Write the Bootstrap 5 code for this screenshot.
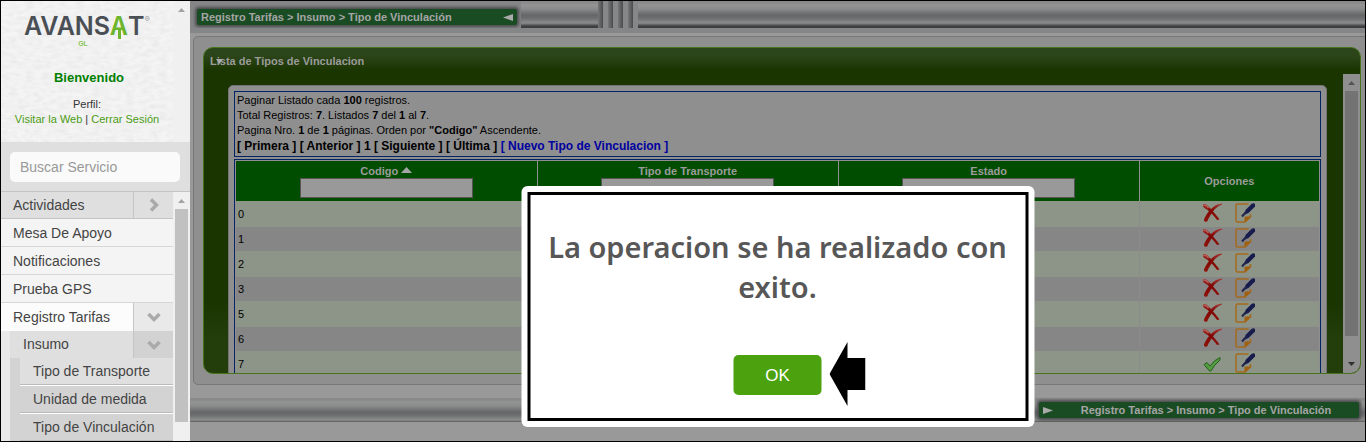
<!DOCTYPE html>
<html lang="es">
<head>
<meta charset="utf-8">
<meta name="viewport" content="width=device-width, initial-scale=1">
<title>Avansat GL - Tipo de Vinculación</title>
<link href="https://cdn.jsdelivr.net/npm/bootstrap@5.3.0/dist/css/bootstrap.min.css" rel="stylesheet">
<style>
*{border-radius:0}
body{font:11px/15px "Liberation Sans",Arial,sans-serif;color:#000;background:#999}
a{text-decoration:none;color:inherit}
.app{border:1px solid #000;height:100vh}
/* sidebar */
.side{width:189px;background:#f0f0f0}
.scroller{width:17px;flex:none;background:#f0f0f0}
.scroller svg{width:17px;height:17px;display:block}
.scroller .thumb{background:#c1c1c1;width:13px;margin:0 auto}
.side .thumb{height:213px}
.brand{height:141px;background:#f4f4f4;position:relative;font-size:11px;color:#333}
.texture{position:absolute;inset:0;width:100%;height:100%}
.logo{font:600 25px/24px Inter,sans-serif;color:#4a4f55;padding-top:13px}
.logo sup{font-size:8px;line-height:8px;color:#999;top:-13px;font-weight:400}
.logo-a{color:#6db52d;position:relative}
.logo-a::after{content:"";position:absolute;left:8px;top:18px;width:3px;height:10px;background:#6db52d}
.logo-sub{font-size:7px;line-height:8px;font-weight:700;color:#8cc45a;margin:2px 8px 0 0}
.hello{font-size:13px;line-height:16px;font-weight:700;color:#008000;margin:22px 0 11px 4px}
.green-link{color:#4b9c14}
.find{background:#dfdfdf;padding:10px 9px 9px;border-bottom:1px solid #c4c4c4}
.find input{height:30px;font-size:14px;border:0;border-radius:5px;background:#fafafa;padding:0 10px;width:170px}
.find input::placeholder{color:#999}
.tree{font-size:14px;color:#444;background:#f4f4f4}
.tree a{padding-left:12px;height:27px;line-height:28px;display:block;flex:1}
.tree li{border-bottom:1px solid #d6d6d6;height:28px;display:flex}
.tree li.short{height:27px}
.tree li.short a,.tree li.leaf a{line-height:26px;padding-left:13px}
.tree li.grey a{padding-left:12px}
.tree li.grey{background:#dfdfdf;border-color:#c4c4c4}
.tree li.open{background:#fcfcfc;border:0}
.tree button{width:40px;border:0;border-left:1px solid #c4c4c4;background:#dfdfdf;padding:0;display:flex;align-items:center;justify-content:center}
.tree .open button{background:#e9e9e9}
.tree li.insumo{background:#dfdfdf;margin-left:9px;border:0}
.tree li.insumo button{background:#d2d2d2}
.tree li.leaf{background:#d3d3d3;margin-left:19px;border-bottom:1px solid #fff;box-shadow:inset 0 -1px #bbb}
.tree li.leaf:first-of-type{background:#dfdfdf}
.rail{background:linear-gradient(90deg,#e9e9e9 9px,#d3d3d3 9px)}
/* header and footer bars */
.metal{background:linear-gradient(#8a8a8c 0 2px,#949494 4px,#8a8b8b 8px,#666768 14px,#6c6d6e 17px,#8b8c8c 22px,#747474 23px,#404142 25px,#3d3e3f 26px)}
.topbar{height:27px}
.under{height:5px;background:#858688}
.crumb{background:#1a4c24;color:#a5a5a5;font-weight:700;width:320px;height:16px;border-radius:2px;box-shadow:0 0 3px 2px #4c4d4e}
.crumb svg{width:10px;height:7px}
.plate{background:#858588;width:331px;padding:8px 3px 0 7px}
.grips{width:40px;height:27px;margin-left:77px;background:repeating-linear-gradient(90deg,#777 0,#4a4b4c 5px,#868789 5px,#868789 10px)}
.outer{border:1px solid #777;background:#8f8f8f;border-radius:5px;margin:3px -4px 0 3px;padding:10px 7px 10px 9px;flex:1;min-height:0}
.greenbox{border:1px solid #47731a;border-radius:10px;background:linear-gradient(#2c461b,#2b4519 8px,#1a3500 22px,#1a3500 calc(100% - 70px),#233e0b calc(100% - 35px));height:100%;overflow:hidden}
.greenbox h1{font-size:11px;line-height:15px;font-weight:700;color:#9b9b9b;margin:0;padding:6px 0 5px 6px;position:relative}
.greenbox h1 svg{position:absolute;left:12px;top:11px;width:7px;height:5px}
.dim{background:#8f8f8f}
.dim .thumb{background:#737373;height:245px}
.sheet{background:#8f8f8f;border:1px solid #747474;border-radius:5px;margin:11px 16px 0 24px;padding:5px;flex:1}
.info{border:1px solid #012466;padding:1px 2px 2px;height:66px}
.pager{font-size:12px;font-weight:700;line-height:16px}
.blue{color:#0000a0}
.gridbox{border:1px solid #012466;margin-top:2px;padding:1px}
.gridbox table{width:100%;table-layout:fixed;border-collapse:collapse}
.gridbox th{background:#004d00;color:#9b9b9b;text-align:center;height:40px;padding:0;border-right:1px solid #8f8f8f;vertical-align:middle;line-height:14px}
.gridbox th:last-child,.gridbox td:last-child{border-right:0}
.gridbox th label{display:block}
.gridbox th svg{width:11px;height:6px;vertical-align:2px}
.gridbox th input{display:block;width:173px;height:20px;margin:0 auto;border:1px solid #555;background:#999;padding:0}
.gridbox td{height:24px;padding:0 2px;background:#868686;border-right:1px solid #8b8b8b;line-height:15px}
.gridbox tr:nth-child(odd) td{height:26px;background:#8c9588}
.gridbox td:last-child{text-align:center;padding:0 2px 2px 0}
.act{border:0;background:none;padding:0;width:20px;height:20px;vertical-align:middle}
.act + .act{margin-left:13px}
.act svg{display:block;width:20px;height:20px}
.footbar{height:24px;margin-top:13px;margin-bottom:19px}
.foot-plate{width:325px;padding:4px 3px 0 2px;margin-right:3px}
/* dialog over the page */
.dlg{position:absolute;left:50%;top:185px;transform:translateX(-50%);width:513px;max-width:100%;background:#fff;border-radius:6px;padding:6px}
.dlg-in{border:3px solid #000;padding:32px 0 23px;text-align:center}
.dlg h2{font:600 29px/40px "Noto Sans","Open Sans",sans-serif;color:#575757;margin:0 0 48px}
.ok{width:88px;height:40px;border:0;border-radius:5px;background:#4ba20e;color:#fff;font-size:17px;font-weight:500;display:block}
.pointer{position:absolute;left:96px;top:-13px;width:36px;height:64px}
</style>
</head>
<body>
<svg width="0" height="0" class="position-absolute" aria-hidden="true">
<defs>
<linearGradient id="red" x1="0" y1="0" x2="0" y2="1"><stop offset="0" stop-color="#a63a34"/><stop offset=".4" stop-color="#810503"/><stop offset="1" stop-color="#8f150c"/></linearGradient>
<symbol id="cross" viewBox="0 0 20 20"><path d="M1 1.5C4-.5 6 3 9 6 12 3 15 1 20 .5L20 1.5C16 3 13 5.500 11 8.500 13 11 15.500 13 17.500 16.500L15 17C13 14 11 12 9.500 10.500 8 13 6 16 5.500 18 4 19.500 1.500 19 2 16.500 3 13.500 5 10.500 7 8.200 5 6 2 5.500 1 3.500Z" fill="url(#red)"/><path d="M1.500 2.500Q4 1.500 6.500 5" stroke="#b7605a" stroke-width="1.500" fill="none"/></symbol>
<symbol id="note" viewBox="0 0 20 20"><path d="M13.500 1H2.500Q1 1 1 2.500V17.500Q1 19 2.500 19H10L15.500 14V11" fill="none" stroke="#a5691c" stroke-width="1.500"/><path d="M9.500 19.500V14.500Q9.500 13.500 10.500 13.500H16Z" fill="#a0600f"/><path d="M10.500 7 16.500 1Q18.500-.5 20 1V3.500L13.500 10 10 11.500Z" fill="#171c4d"/><path d="M7 13.500 11.500 8.500" stroke="#20244d" stroke-width="2"/></symbol>
<symbol id="tick" viewBox="0 0 20 20"><path d="M2 11.500 5 9.500 8 13Q12 7 18 4.500V7Q12 12 9 18H7.500Z" fill="#529a40" stroke="#28621f" stroke-width="1"/></symbol>
<symbol id="down" viewBox="0 0 14 10"><path d="M1.500 2 7 7.500 12.500 2" fill="none" stroke="#aaa" stroke-width="3.500"/></symbol>
<symbol id="sup" viewBox="0 0 17 17"><path d="M5 11 8.500 7 12 11Z"/></symbol>
</defs></svg>
<div class="app d-flex overflow-hidden">
<aside class="side flex-shrink-0 d-flex flex-column">
  <div class="d-flex">
    <div class="brand flex-grow-1 text-center">
      <svg class="texture" aria-hidden="true"><filter id="fur"><feTurbulence type="fractalNoise" baseFrequency=".12 .25" numOctaves="3" seed="4"/><feColorMatrix values="0 0 0 0 .45  0 0 0 0 .45  0 0 0 0 .45  .3 0 0 0 -.1"/></filter><rect width="100%" height="100%" filter="url(#fur)"/></svg>
      <div class="position-relative">
        <div class="logo text-nowrap">AVANS<span class="logo-a">A</span>T<sup>®</sup></div>
        <div class="logo-sub">GL</div>
        <div class="hello">Bienvenido</div>
        <div>Perfil:</div>
        <div class="text-nowrap"><a class="green-link" href="#">Visitar la Web</a> | <a class="green-link" href="#">Cerrar Sesión</a></div>
      </div>
    </div>
    <div class="scroller"><svg fill="#a3a3a3"><use href="#sup"/></svg></div>
  </div>
  <div class="find"><input type="text" placeholder="Buscar Servicio" aria-label="Buscar Servicio"></div>
  <div class="d-flex flex-grow-1 overflow-hidden">
    <nav class="tree flex-grow-1">
      <ul class="list-unstyled m-0">
        <li class="short grey"><a href="#">Actividades</a><button aria-label="Abrir"><svg width="10" height="14" viewBox="0 0 10 14"><path d="M2 1.500 7.500 7 2 12.500" fill="none" stroke="#aaa" stroke-width="3.500"/></svg></button></li>
        <li><a href="#">Mesa De Apoyo</a></li>
        <li><a href="#">Notificaciones</a></li>
        <li><a href="#">Prueba GPS</a></li>
        <li class="open"><a href="#">Registro Tarifas</a><button aria-label="Cerrar"><svg width="14" height="10"><use href="#down"/></svg></button></li>
      </ul>
      <ul class="list-unstyled m-0 rail">
        <li class="short insumo"><a href="#">Insumo</a><button aria-label="Cerrar"><svg width="14" height="10"><use href="#down"/></svg></button></li>
      </ul>
      <ul class="list-unstyled m-0 rail">
        <li class="leaf"><a href="#">Tipo de Transporte</a></li>
        <li class="leaf"><a href="#">Unidad de medida</a></li>
        <li class="leaf"><a href="#">Tipo de Vinculación</a></li>
      </ul>
    </nav>
    <div class="scroller"><svg fill="#a3a3a3"><use href="#sup"/></svg><div class="thumb"></div></div>
  </div>
</aside>
<main class="flex-grow-1 d-flex flex-column position-relative overflow-hidden">
  <div class="topbar metal d-flex flex-shrink-0">
    <div class="plate"><div class="crumb d-flex align-items-center justify-content-between px-1"><span class="ms-0">Registro Tarifas &gt; Insumo &gt; Tipo de Vinculación</span><svg viewBox="0 0 10 7"><path d="M0 3.500 10 0V7Z" fill="#aaa"/></svg></div></div>
    <div class="grips"></div>
  </div>
  <div class="under flex-shrink-0"></div>
  <section class="outer">
    <div class="greenbox d-flex flex-column">
      <h1>Lista de Tipos de Vinculacion<svg viewBox="0 0 7 5"><path d="M0 0H7L3.500 5Z" fill="#aaa"/></svg></h1>
      <div class="d-flex flex-grow-1 overflow-hidden">
        <div class="sheet align-self-start">
          <div class="info">
            <div>Paginar Listado cada <b>100</b> registros.</div>
            <div>Total Registros: <b>7</b>. Listados <b>7</b> del <b>1</b> al <b>7</b>.</div>
            <div>Pagina Nro. <b>1</b> de <b>1</b> páginas. Orden por <b>"Codigo"</b> Ascendente.</div>
            <div class="pager"><a href="#">[ Primera ]</a> <a href="#">[ Anterior ]</a> 1 <a href="#">[ Siguiente ]</a> <a href="#">[ Última ]</a> <a class="blue" href="#">[ Nuevo Tipo de Vinculacion ]</a></div>
          </div>
          <div class="gridbox">
            <table>
              <colgroup><col><col><col><col style="width:16.6%"></colgroup>
              <thead><tr>
                <th><label for="f1">Codigo <svg viewBox="0 0 11 6"><path d="M0 6 5.500 0 11 6Z" fill="#a5a5a5"/></svg></label><input id="f1" type="text"></th>
                <th><label for="f2">Tipo de Transporte</label><input id="f2" type="text"></th>
                <th><label for="f3">Estado</label><input id="f3" type="text"></th>
                <th>Opciones</th>
              </tr></thead>
              <tbody id="rows"></tbody>
            </table>
          </div>
        </div>
        <div class="scroller dim d-flex flex-column"><svg fill="#555"><use href="#sup"/></svg><div class="thumb"></div><svg class="mt-auto" viewBox="0 0 17 17" fill="#303030"><path d="M5 6H12L8.500 10Z"/></svg></div>
      </div>
    </div>
  </section>
  <div class="footbar metal d-flex flex-shrink-0 justify-content-end">
    <div class="foot-plate"><div class="crumb d-flex align-items-center ps-1"><svg viewBox="0 0 10 7"><path d="M10 3.500 0 0V7Z" fill="#aaa"/></svg><span class="flex-grow-1 text-center">Registro Tarifas &gt; Insumo &gt; Tipo de Vinculación</span></div></div>
  </div>
  <div class="dlg" role="dialog" aria-labelledby="msg">
    <div class="dlg-in">
      <h2 id="msg">La operacion se ha realizado con exito.</h2>
      <div class="position-relative d-inline-block align-top"><button class="ok">OK</button><svg class="pointer" viewBox="0 0 36 64"><path d="M0 32 18 0V16H36V48H18V64Z"/></svg></div>
    </div>
  </div>
</main>
</div>
<script>
document.getElementById('rows').innerHTML = [0, 1, 2, 3, 5, 6, 7].map(function (code) {
  var on = code === 7;
  return '<tr><td>' + code + '</td><td></td><td></td><td>' +
    '<button class="act" aria-label="' + (on ? 'Activar' : 'Inactivar') + '"><svg><use href="#' + (on ? 'tick' : 'cross') + '"/></svg></button>' +
    '<button class="act" aria-label="Editar"><svg><use href="#note"/></svg></button></td></tr>';
}).join('');
</script>
<script src="https://cdn.jsdelivr.net/npm/bootstrap@5.3.0/dist/js/bootstrap.bundle.min.js"></script>
</body>
</html>
